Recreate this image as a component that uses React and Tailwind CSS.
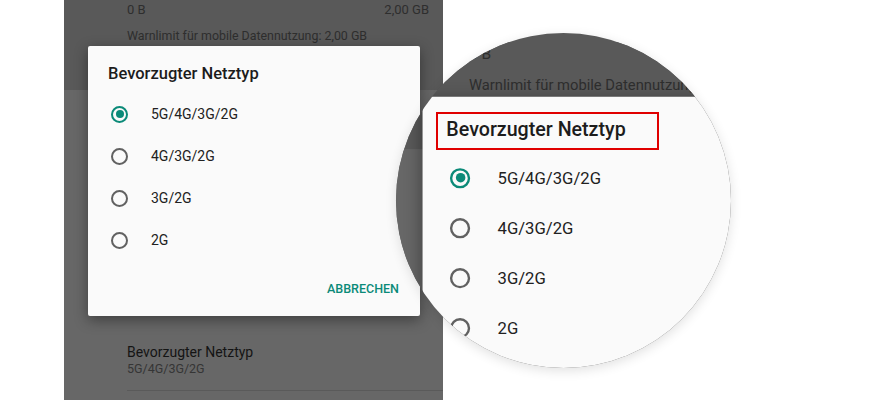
const Radio = ({ checked }) => (
  <span
    className={
      "flex h-[17px] w-[17px] shrink-0 items-center justify-center rounded-full border-2 " +
      (checked ? "border-[#0b8a78]" : "border-[#616161]")
    }
  >
    {checked && <span className="h-[8px] w-[8px] rounded-full bg-[#0b8a78]" />}
  </span>
);

const options = ["5G/4G/3G/2G", "4G/3G/2G", "3G/2G", "2G"];

// the dimmed settings screen with the dialog on top
const PhoneScreen = () => (
  <div className="relative flex h-[400px] w-[379px] flex-col bg-[#676767] font-['Roboto',sans-serif]">
    {/* usage band */}
    <div className="h-[90px] bg-[#595959] pl-[63px] pr-[14px] pt-[2px] text-[#2e2e2e]">
      <div className="flex justify-between text-[13px] leading-4">
        <span>0 B</span>
        <span>2,00 GB</span>
      </div>
      <div className="mt-[10px] text-[12.4px] leading-4">
        Warnlimit für mobile Datennutzung: 2,00 GB
      </div>
    </div>

    {/* list item under the dialog */}
    <div className="flex flex-1 flex-col pl-[63px] pt-[253px]">
      <div className="text-[14px] leading-[18px] text-[#141414]">Bevorzugter Netztyp</div>
      <div className="text-[12.5px] leading-4 text-[#353535]">5G/4G/3G/2G</div>
      <div className="mt-[13px] h-px bg-[#5a5a5a]" />
    </div>

    {/* dialog */}
    <div className="absolute left-[24px] top-[46px] flex h-[270px] w-[332px] flex-col rounded-[2px] bg-[#fafafa] pt-[18px] shadow-[0_4px_14px_rgba(0,0,0,0.4)]">
      <div className="pl-[20px] text-[16.5px] font-medium leading-5 text-[#1c1c1c]">
        Bevorzugter Netztyp
      </div>
      <div className="mt-[9px] flex flex-col">
        {options.map((o, i) => (
          <div key={o} className="flex h-[42px] items-center pl-[23px]">
            <Radio checked={i === 0} />
            <span className="ml-[23px] text-[14px] text-[#212121]">{o}</span>
          </div>
        ))}
      </div>
      <div className="mt-[20px] flex justify-end pr-[21px]">
        <span className="text-[12.5px] font-medium leading-4 text-[#0b8a78]">
          ABBRECHEN
        </span>
      </div>
    </div>
  </div>
);

export default function App() {
  return (
    <div className="relative flex h-[400px] w-[879px] overflow-hidden bg-white">
      <div className="w-[64px]" />
      <div className="h-[400px] w-[379px] overflow-hidden">
        <PhoneScreen />
      </div>

      {/* magnifier */}
      <div className="absolute left-[396px] top-[33px] h-[335px] w-[335px] overflow-hidden rounded-full bg-[#595959] shadow-[0_3px_12px_rgba(0,0,0,0.12)]">
        <div className="absolute left-[-2.4px] top-[9.3px] origin-top-left scale-[1.19]">
          <PhoneScreen />
        </div>
        <div className="absolute left-[40px] top-[79px] h-[38px] w-[223px] border-2 border-[#e00000]" />
      </div>
    </div>
  );
}
